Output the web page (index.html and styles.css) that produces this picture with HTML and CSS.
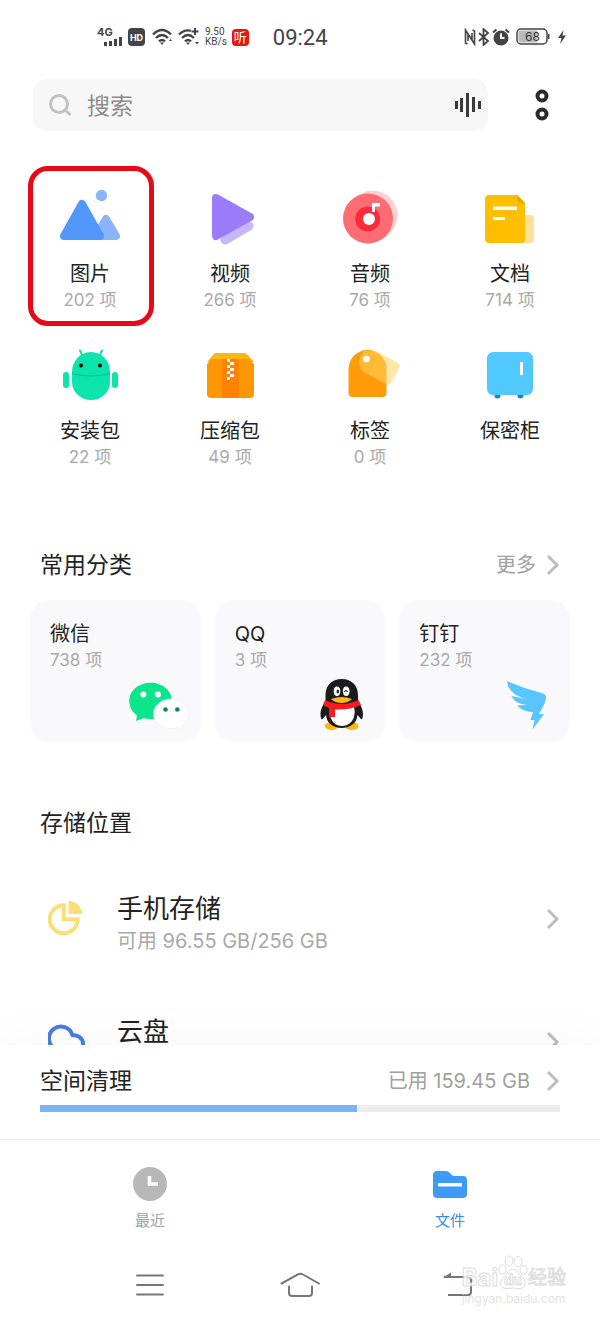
FILE: index.html
```html
<!DOCTYPE html>
<html lang="zh-CN">
<head>
    <meta charset="UTF-8">
    <meta name="viewport" content="width=device-width, initial-scale=1.0">
    <title>文件管理</title>
    <link rel="stylesheet" href="styles.css">
</head>
<body>
    <div class="screen">
        <div class="status-bar">
            <div class="status-left">
                <svg class="signal" width="26" height="22" viewBox="0 0 26 22">
                    <text class="net-type" x="0" y="10">4G</text>
                    <path d="M7 16h3v4H7zM12 15h3v5h-3zM17 13h3v7h-3zM22 11h3v9h-3z" fill="#444"/>
                </svg>
                <svg width="17" height="18" viewBox="0 0 17 18">
                    <rect width="17" height="18" rx="4" fill="#444"/>
                    <text class="hd" x="8.5" y="13" text-anchor="middle">HD</text>
                </svg>
                <svg class="wifi" width="21" height="18" viewBox="0 0 21 18" fill="none" stroke="#444" stroke-width="2.4">
                    <path d="M1 6.5Q10 -2.5 19 6.5M4 10Q10 4 16 10M7 13.3Q10 10.5 13 13.3"/>
                    <path d="M8 14.5h4l-2 2.5zM17 13l1.500-2 1.500 2z" fill="#444" stroke="none"/>
                </svg>
                <svg width="22" height="18" viewBox="0 0 22 18" fill="none" stroke="#444" stroke-width="2.4">
                    <path d="M1 6.500Q6.500 1 13 2.800M4 10Q10 4 16 10M7 13.300Q10 10.500 13 13.300"/>
                    <path d="M17 0v7M13.500 3.500h7" stroke-width="2"/>
                    <path d="M8 14.500h4l-2 2.500zM17 14h4l-2 2.500z" fill="#444" stroke="none"/>
                </svg>
                <div class="speed">9.50<br>KB/s</div>
                <span class="listen">听</span>
            </div>
            <time class="clock">09:24</time>
            <div class="status-right">
                <svg width="12" height="18" viewBox="0 0 12 18" fill="none" stroke="#444" stroke-width="1.600">
                    <path d="M3.500 16L1.500 15V2l6.500 10V5M8.500 2l2 1v13L4 6v7"/>
                </svg>
                <svg width="12" height="18" viewBox="0 0 12 18" fill="none" stroke="#444" stroke-width="1.800">
                    <path d="M1 5l9 8-4.500 4V1L10 5l-9 8"/>
                </svg>
                <svg width="18" height="18" viewBox="0 0 18 18" fill="none">
                    <circle cx="9" cy="10" r="7.500" fill="#444"/>
                    <path d="M9 5.500V10h3.500" stroke="#fff" stroke-width="2"/>
                    <path d="M1 4.500L4.500 1.500M17 4.500L13.500 1.500" stroke="#444" stroke-width="2"/>
                </svg>
                <svg class="battery" width="34" height="18" viewBox="0 0 34 18">
                    <rect x="1" y="1" width="30" height="15" rx="4" fill="#fff" stroke="#444" stroke-width="1.500"/>
                    <path d="M5 2.500h16v12H5a2.500 2.500 0 0 1-2.500-2.500V5A2.500 2.500 0 0 1 5 2.500z" fill="#bbb"/>
                    <path d="M32 6h1.500v5H32z" fill="#444"/>
                    <text class="battery-level" x="16.500" y="13" text-anchor="middle">68</text>
                </svg>
                <svg width="10" height="16" viewBox="0 0 10 16"><path d="M6.500 1L1 9h3.500L3 15l6-8.500H5.500z" fill="#444"/></svg>
            </div>
        </div>

        <header class="top">
            <div class="search">
                <svg width="26" height="26" viewBox="0 0 26 26" fill="none" stroke="#c2c2c2" stroke-width="3">
                    <circle cx="11" cy="12" r="8.500"/>
                    <path d="M17 18l5.500 5"/>
                </svg>
                <input type="search" placeholder="搜索" aria-label="搜索">
                <button class="icon-btn" aria-label="语音搜索">
                    <svg width="26" height="26" viewBox="0 0 26 26" fill="#3a3a3a">
                        <path d="M0 9h3v8H0zM5 6h3v14H5zM11 1h3v24h-3zM17 5h3v15h-3zM23 9h3v8h-3z"/>
                    </svg>
                </button>
            </div>
            <button class="icon-btn" aria-label="更多选项">
                <svg width="16" height="36" viewBox="0 0 16 36" fill="none" stroke="#2a2a2a" stroke-width="4">
                    <circle cx="8" cy="9" r="4.500"/>
                    <circle cx="8" cy="27" r="4.500"/>
                </svg>
            </button>
        </header>

        <main class="content">
            <nav class="types">
                <a class="type marked" href="#">
                    <svg class="type-icon" viewBox="0 0 60 60">
                        <circle cx="41.500" cy="9.500" r="5.700" fill="#8ab5fb"/>
                        <path d="M46 33l10 17H36z" fill="#8ab5fb" stroke="#8ab5fb" stroke-width="8" stroke-linejoin="round"/>
                        <path d="M22 18l18 32H4z" fill="#5297fa" stroke="#5297fa" stroke-width="8" stroke-linejoin="round"/>
                    </svg>
                    <span class="type-name">图片</span>
                    <span class="count">202 项</span>
                </a>
                <a class="type" href="#">
                    <svg class="type-icon" viewBox="0 0 60 60">
                        <path d="M25 54l24-14" stroke="#c6b6ff" stroke-width="9" stroke-linecap="round"/>
                        <path d="M16 12l34 19-34 19z" fill="#9b7dfb" stroke="#9b7dfb" stroke-width="8" stroke-linejoin="round"/>
                    </svg>
                    <span class="type-name">视频</span>
                    <span class="count">266 项</span>
                </a>
                <a class="type" href="#">
                    <svg class="type-icon" viewBox="0 0 60 60">
                        <circle cx="32.500" cy="29.500" r="25" fill="#ffcfd1"/>
                        <circle cx="28" cy="32.500" r="25" fill="#ff6c73"/>
                        <circle cx="27.700" cy="33" r="12.500" fill="#fa2b3b"/>
                        <circle cx="29" cy="33" r="6" fill="#fff"/>
                        <path d="M32 17h8v3.500h-5V26h-3z" fill="#fff"/>
                    </svg>
                    <span class="type-name">音频</span>
                    <span class="count">76 项</span>
                </a>
                <a class="type" href="#">
                    <svg class="type-icon" viewBox="0 0 60 60">
                        <rect x="36" y="29" width="18" height="28" rx="4" fill="#ffe196"/>
                        <path d="M9 9h28l8 8v36a4 4 0 0 1-4 4H9a4 4 0 0 1-4-4V13a4 4 0 0 1 4-4z" fill="#ffbf00"/>
                        <path d="M37 9v4a4 4 0 0 0 4 4h4z" fill="#f5a300"/>
                        <path d="M13 20.500h24V24H13zM13 31h12v3H13z" fill="#fff"/>
                    </svg>
                    <span class="type-name">文档</span>
                    <span class="count">714 项</span>
                </a>
                <a class="type" href="#">
                    <svg class="type-icon" viewBox="0 0 60 60">
                        <g fill="#0be5ac">
                            <path d="M12 29a19 20 0 0 1 38 0v10a19 18 0 0 1-38 0z"/>
                            <rect x="3" y="29" width="6" height="16" rx="3"/>
                            <rect x="52" y="29" width="6" height="16" rx="3"/>
                            <path d="M20 7.500l3 6M42 7.500l-3 6" stroke="#0be5ac" stroke-width="2" stroke-linecap="round"/>
                        </g>
                        <path d="M12 30.500q19 5 38 0" fill="none" stroke="#08b98d" stroke-width="1"/>
                        <circle cx="21" cy="22.500" r="2"/>
                        <circle cx="40" cy="22.500" r="2"/>
                    </svg>
                    <span class="type-name">安装包</span>
                    <span class="count">22 项</span>
                </a>
                <a class="type" href="#">
                    <svg class="type-icon" viewBox="0 0 60 60">
                        <path d="M16 10h28q2 0 4 2l6 7H7l6-7q1-2 3-2z" fill="#fcb717"/>
                        <path d="M12 16h37l5 5v30a4 4 0 0 1-4 4H11a4 4 0 0 1-4-4V21z" fill="#ff9700"/>
                        <path d="M22 16h17v39H22z" fill="#ff8200"/>
                        <path d="M27 16h3v3h-3zM30 19h4v3h-4zM27 22h3v3h-3zM30 25h4v3h-4zM27 28h3v3h-3zM30 31h4v3h-4zM27 34h3v3h-3z" fill="#fff"/>
                    </svg>
                    <span class="type-name">压缩包</span>
                    <span class="count">49 项</span>
                </a>
                <a class="type" href="#">
                    <svg class="type-icon" viewBox="0 0 60 60">
                        <path d="M8.500 26a19 19 0 0 1 38 0v24a4 4 0 0 1-4 4h-30a4 4 0 0 1-4-4z" fill="#ff9c08"/>
                        <path d="M36 8l22 12q3 2 1 5l-8 15q-2 3-5 1L24 29Q17 24 20 14L24 8z" fill="#ffd360" opacity=".55"/>
                        <circle cx="26.500" cy="16" r="3.300" fill="#fff"/>
                    </svg>
                    <span class="type-name">标签</span>
                    <span class="count">0 项</span>
                </a>
                <a class="type" href="#">
                    <svg class="type-icon" viewBox="0 0 60 60">
                        <circle cx="17.500" cy="52.500" r="3" fill="#1b86bd"/>
                        <circle cx="40.500" cy="52.500" r="3" fill="#1b86bd"/>
                        <rect x="7" y="9" width="46" height="43" rx="6" fill="#51c8fe"/>
                        <path d="M40 19h3v13h-3z" fill="#fff"/>
                    </svg>
                    <span class="type-name">保密柜</span>
                </a>
            </nav>

            <section class="common">
                <div class="section-head">
                    <h2>常用分类</h2>
                    <a class="more" href="#">更多
                        <svg class="chevron" viewBox="0 0 14 22"><path d="M2 2l9 9-9 9"/></svg>
                    </a>
                </div>
                <div class="cards">
                    <a class="card" href="#">
                        <span class="card-name">微信</span>
                        <span class="count">738 项</span>
                        <svg class="card-icon" viewBox="0 0 60 56">
                            <path d="M21.500 6.700c12 0 21.500 8 21.500 18.300S33.500 43 21.500 43q-4 0-7-.8L7 45l1-5.500C3 36 .3 31 .3 25 .3 14.700 9.700 6.700 21.500 6.700z" fill="#0be58c"/>
                            <circle cx="14.300" cy="18.500" r="3" fill="#fff"/>
                            <circle cx="29" cy="18.500" r="3" fill="#fff"/>
                            <path d="M42 23c10 0 17.500 6.500 17.500 15 0 5-2.500 9-6 11.500l.5 4.500-5-2.500q-3 1.200-7 1.200c-10 0-17.500-6.500-17.500-14.700S32 23 42 23z" fill="#fff" stroke="#eee" stroke-width=".6"/>
                            <circle cx="36.500" cy="33.500" r="2.300" fill="#108060"/>
                            <circle cx="48.300" cy="33.500" r="2.300" fill="#108060"/>
                        </svg>
                    </a>
                    <a class="card" href="#">
                        <span class="card-name">QQ</span>
                        <span class="count">3 项</span>
                        <svg class="card-icon" viewBox="0 0 60 56">
                            <ellipse cx="18.700" cy="50" rx="7" ry="4" fill="#fbb90d"/>
                            <ellipse cx="38.700" cy="50" rx="7" ry="4" fill="#fbb90d"/>
                            <path d="M28.700 3C38 3 45 9 45 19v6c2 3 5 8 5 13 0 4-1 6-2 5l-3.500-4C44 47 37 52 28.700 52S13.500 47 13 39l-3.500 4c-1 1-2-1-2-5 0-5 3-10 5-13v-6C12.500 9 19.500 3 28.700 3z" fill="#1c1c1e"/>
                            <path d="M18 31h23q1.500 5 0 10c-2 6-7 9-12 9s-10-3-11.500-9q-1-5 .5-10z" fill="#fff"/>
                            <ellipse cx="24" cy="15.300" rx="3.300" ry="4.700" fill="#fff"/>
                            <ellipse cx="33.200" cy="15.300" rx="3.300" ry="4.700" fill="#fff"/>
                            <ellipse cx="24.800" cy="15.500" rx="1.200" ry="2" fill="#1c1c1e"/>
                            <path d="M31.500 16q1.500-3 3 0" fill="none" stroke="#1c1c1e" stroke-width="1.200"/>
                            <path d="M18 23q10.500-4 21 0-4 4-10.500 4T18 23z" fill="#fbb90d"/>
                            <path d="M12 24q16.500 8 33.500 0l2.500 5q-11 5-26 4.500V41h-6v-9l-6-3z" fill="#fb1a22"/>
                        </svg>
                    </a>
                    <a class="card" href="#">
                        <span class="card-name">钉钉</span>
                        <span class="count">232 项</span>
                        <svg class="card-icon" viewBox="0 0 60 56">
                            <path d="M9 5q18 8 36 12.500 4 1.500 2.800 5.500Q47 28 41 38h5L34.500 53.500 36.500 44h-4l2.500-8q-10 0-16-6.500l10-.5q-12-1-15.500-9l16 3.500Q10 19 9 5z" fill="#58c5fc"/>
                        </svg>
                    </a>
                </div>
            </section>

            <section class="storage">
                <div class="section-head">
                    <h2>存储位置</h2>
                </div>
                <div class="places">
                    <a class="place" href="#">
                        <svg class="place-icon" viewBox="0 0 44 44">
                            <path d="M15.700 5.300a14 14 0 1 0 14 14h-14z" fill="none" stroke="#fadf76" stroke-width="4"/>
                            <path d="M20.500 .7q12 1 14 13.300h-14z" fill="#fadf76"/>
                        </svg>
                        <span class="place-text">
                            <span class="place-name">手机存储</span>
                            <span class="place-info">可用 96.55 GB/256 GB</span>
                        </span>
                        <svg class="chevron" viewBox="0 0 14 22"><path d="M2 2l9 9-9 9"/></svg>
                    </a>
                    <a class="place" href="#">
                        <svg class="place-icon" viewBox="0 0 44 44">
                            <path d="M7 26A12 12 0 1 1 24.500 12.300a9 9 0 1 1 3 18H13q-4 0-6-4.300z" fill="none" stroke="#4a7ddb" stroke-width="4" stroke-linejoin="round"/>
                        </svg>
                        <span class="place-text">
                            <span class="place-name">云盘</span>
                        </span>
                        <svg class="chevron" viewBox="0 0 14 22"><path d="M2 2l9 9-9 9"/></svg>
                    </a>
                </div>
            </section>
        </main>

        <section class="cleanup">
            <a class="cleanup-row" href="#">
                <span class="cleanup-name">空间清理</span>
                <span class="more used">已用 159.45 GB
                    <svg class="chevron" viewBox="0 0 14 22"><path d="M2 2l9 9-9 9"/></svg>
                </span>
            </a>
            <progress class="usage" value="61" max="100" aria-label="已用空间"></progress>
        </section>

        <footer class="bottom">
            <nav class="tabs">
                <a class="tab" href="#">
                    <svg width="36" height="36" viewBox="0 0 36 36">
                        <circle cx="18" cy="18" r="17" fill="#b8b8b8"/>
                        <path d="M17.500 10v8H26" fill="none" stroke="#fff" stroke-width="3.500"/>
                    </svg>
                    最近
                </a>
                <a class="tab active" href="#">
                    <svg width="36" height="36" viewBox="0 0 36 36">
                        <path d="M5 5h9q2 0 4 2l3 3h10a4 4 0 0 1 4 4v14a4 4 0 0 1-4 4H5a4 4 0 0 1-4-4V9a4 4 0 0 1 4-4z" fill="#3e9af7"/>
                        <path d="M6 17h24v3.500H6z" fill="#fff"/>
                    </svg>
                    文件
                </a>
            </nav>
            <div class="system-nav">
                <button class="icon-btn" aria-label="最近任务">
                    <svg width="40" height="30" viewBox="0 0 40 30" fill="none" stroke="#777" stroke-width="2" stroke-linecap="round">
                        <path d="M7 5.500h26M7 15h26M7 24.500h26"/>
                    </svg>
                </button>
                <button class="icon-btn" aria-label="主屏幕">
                    <svg width="40" height="30" viewBox="0 0 40 30" fill="none" stroke="#777" stroke-width="2" stroke-linecap="round">
                        <path d="M1.500 13.500L18 4.500q2.500-1.500 5 0l16 9M9 16.500V23q0 3 3 3h17q3 0 3-3v-6.500"/>
                    </svg>
                </button>
                <button class="icon-btn" aria-label="返回">
                    <svg width="40" height="30" viewBox="0 0 40 30" fill="none" stroke="#777" stroke-width="2">
                        <path d="M14 7h24q3 0 3 3v12q0 3-3 3H18"/>
                        <path d="M13 7.500l8-5v5z" fill="#777" stroke="none"/>
                    </svg>
                </button>
            </div>
        </footer>

        <div class="watermark">
            <div class="brand">
                <span>Bai</span>
                <svg width="30" height="36" viewBox="0 0 30 36" fill="#fff" stroke="#d5d5d5">
                    <ellipse cx="4.500" cy="14.500" rx="3.500" ry="4.500"/>
                    <ellipse cx="11" cy="6" rx="4" ry="5"/>
                    <ellipse cx="20" cy="6.500" rx="4" ry="5"/>
                    <ellipse cx="25.500" cy="15" rx="3.500" ry="4.500"/>
                    <path d="M15 14q4 0 7 6 6 4 5 9-2 6-7 4.500-5-1-10 0-6 1-7.500-4.500-.5-5 5-9Q11 14 15 14z"/>
                    <text class="paw-text" x="15" y="30" text-anchor="middle">du</text>
                </svg>
                <span class="brand-cn">经验</span>
            </div>
            <div class="brand-url">jingyan.baidu.com</div>
        </div>
    </div>
</body>
</html>
```
FILE: styles.css
```css
* {
    box-sizing: border-box;
}
body {
    margin: 0;
    background-color: #fff;
    color: #222;
    font-family: Inter, "Noto Sans CJK SC", sans-serif;
}
a {
    color: inherit;
    text-decoration: none;
}
svg {
    display: block;
    flex-shrink: 0;
}
.icon-btn {
    padding: 0;
    border: none;
    background: none;
}
.screen {
    position: relative;
    display: flex;
    flex-direction: column;
    height: 100vh;
    overflow: hidden;
}

/* status bar */
.status-bar {
    display: flex;
    align-items: center;
    height: 74px;
    padding: 0 33px 0 97px;
    color: #444;
}
.status-left {
    display: flex;
    align-items: center;
    gap: 5px;
}
.signal {
    overflow: visible;
}
.net-type {
    font-size: 11px;
    font-weight: 700;
    fill: #444;
}
.hd {
    font-size: 9px;
    font-weight: 700;
    fill: #fff;
}
.wifi {
    margin-left: 2px;
}
.speed {
    font-family: Roboto, sans-serif;
    font-size: 10px;
    line-height: 10px;
}
.listen {
    width: 17px;
    border-radius: 4px;
    background-color: #e8180c;
    color: #fff;
    font-size: 13px;
    line-height: 17px;
    text-align: center;
}
.clock {
    margin-left: 24px;
    font-family: Roboto, sans-serif;
    font-size: 22px;
}
.status-right {
    display: flex;
    align-items: center;
    gap: 2px;
    margin-left: auto;
}
.battery {
    margin: 0 5px 0 4px;
}
.battery-level {
    font-size: 12px;
    fill: #333;
}

/* search */
.top {
    display: flex;
    align-items: center;
    gap: 46px;
    margin-top: 5px;
    padding: 0 50px 0 33px;
}
.search {
    display: flex;
    flex: 1;
    align-items: center;
    gap: 13px;
    min-width: 0;
    height: 52px;
    padding: 0 7px 0 15px;
    border-radius: 14px;
    background-color: #f7f7f7;
}
.search input {
    flex: 1;
    min-width: 0;
    padding: 2px 0 0;
    border: none;
    outline: none;
    background: none;
    color: #222;
    font: inherit;
    font-size: 23px;
}
.search input::placeholder {
    color: #8c8c8c;
}

/* scrolling content */
.content {
    flex: 1;
    min-height: 0;
    overflow-y: auto;
    scrollbar-width: none;
}
.types {
    display: grid;
    grid-template-columns: repeat(4, 1fr);
    row-gap: 30px;
    padding: 55px 20px 0;
}
.type {
    position: relative;
    display: flex;
    flex-direction: column;
    align-items: center;
}
.marked::after {
    content: "";
    position: absolute;
    inset: -20px 6px -13px 8px;
    border: 5px solid #e60a18;
    border-radius: 20px;
}
.type-icon {
    width: 60px;
    height: 60px;
    margin-bottom: 14px;
}
.type-name,
.card-name {
    font-size: 20px;
    line-height: 28px;
}
.count {
    color: #a9a9a9;
    font-size: 17px;
    line-height: 25px;
}
.section-head {
    display: flex;
    align-items: center;
    justify-content: space-between;
    padding: 0 40px;
}
h2 {
    margin: 0;
    font-size: 23px;
    font-weight: 400;
    line-height: 34px;
}
.more {
    display: flex;
    align-items: center;
    gap: 10px;
    color: #a0a0a0;
    font-size: 20px;
    line-height: 28px;
}
.used {
    gap: 16px;
}
.chevron {
    width: 14px;
    height: 22px;
    fill: none;
    stroke: #bdbdbd;
    stroke-width: 3;
}
.common {
    margin-top: 78px;
}
.cards {
    display: grid;
    grid-template-columns: repeat(3, 1fr);
    gap: 14px;
    padding: 18px 30px 0;
}
.card {
    display: flex;
    flex-direction: column;
    padding: 20px 12px 10px 20px;
    border-radius: 20px;
    background-color: #f9f9fb;
}
.card .count {
    line-height: 24px;
}
.card-icon {
    align-self: flex-end;
    width: 60px;
    height: 56px;
    margin-top: 4px;
}
.storage {
    margin-top: 64px;
}
.places {
    display: flex;
    flex-direction: column;
    gap: 55px;
    margin-top: 48px;
}
.place {
    display: flex;
    align-items: flex-start;
    height: 68px;
    padding: 0 40px 0 48px;
}
.place-icon {
    width: 44px;
    height: 44px;
    margin-top: 12px;
}
.place-text {
    display: flex;
    flex: 1;
    flex-direction: column;
    gap: 7px;
    margin-left: 25px;
    padding-top: 7px;
}
.place-name {
    font-size: 26px;
    line-height: 28px;
}
.place-info {
    color: #a9a9a9;
    font-size: 20px;
    line-height: 22px;
}
.place .chevron {
    margin-top: 20px;
}

/* storage usage */
.cleanup {
    position: relative;
    padding: 20px 40px 27px;
    background-color: #fff;
    box-shadow: 0 0 60px rgba(0, 0, 0, 0.04);
}
.cleanup-row {
    display: flex;
    align-items: center;
    justify-content: space-between;
    line-height: 32px;
}
.cleanup-name {
    font-size: 23px;
}
.usage {
    display: block;
    width: 100%;
    height: 7px;
    margin-top: 8px;
    border: none;
    appearance: none;
}
.usage::-webkit-progress-bar {
    background-color: #ececec;
}
.usage::-webkit-progress-value {
    background-color: #7fb2f5;
}

/* bottom navigation */
.bottom {
    position: relative;
    border-top: 1px solid #eee;
    background-color: #fff;
}
.tabs {
    display: grid;
    grid-template-columns: 1fr 1fr;
    padding-top: 26px;
}
.tab {
    display: flex;
    flex-direction: column;
    align-items: center;
    gap: 9px;
    color: #a0a0a0;
    font-size: 15px;
    line-height: 20px;
}
.tab.active {
    color: #3a8edb;
}
.system-nav {
    display: grid;
    grid-template-columns: repeat(3, 1fr);
    justify-items: center;
    align-items: center;
    height: 70px;
    margin-top: 19px;
    padding: 0 75px;
}
.system-nav svg {
    overflow: visible;
}

/* watermark */
.watermark {
    position: absolute;
    right: 34px;
    bottom: 13px;
    color: #fff;
    opacity: 0.8;
    -webkit-text-stroke: 1px #d5d5d5;
    pointer-events: none;
}
.brand {
    display: flex;
    align-items: flex-end;
    font-size: 24px;
    font-weight: 700;
    line-height: 26px;
}
.brand-cn {
    font-size: 19px;
    font-weight: 400;
}
.paw-text {
    font-size: 14px;
    font-weight: 700;
}
.brand-url {
    color: #ddd;
    font-size: 12px;
    line-height: 16px;
    -webkit-text-stroke: 0;
}
```
